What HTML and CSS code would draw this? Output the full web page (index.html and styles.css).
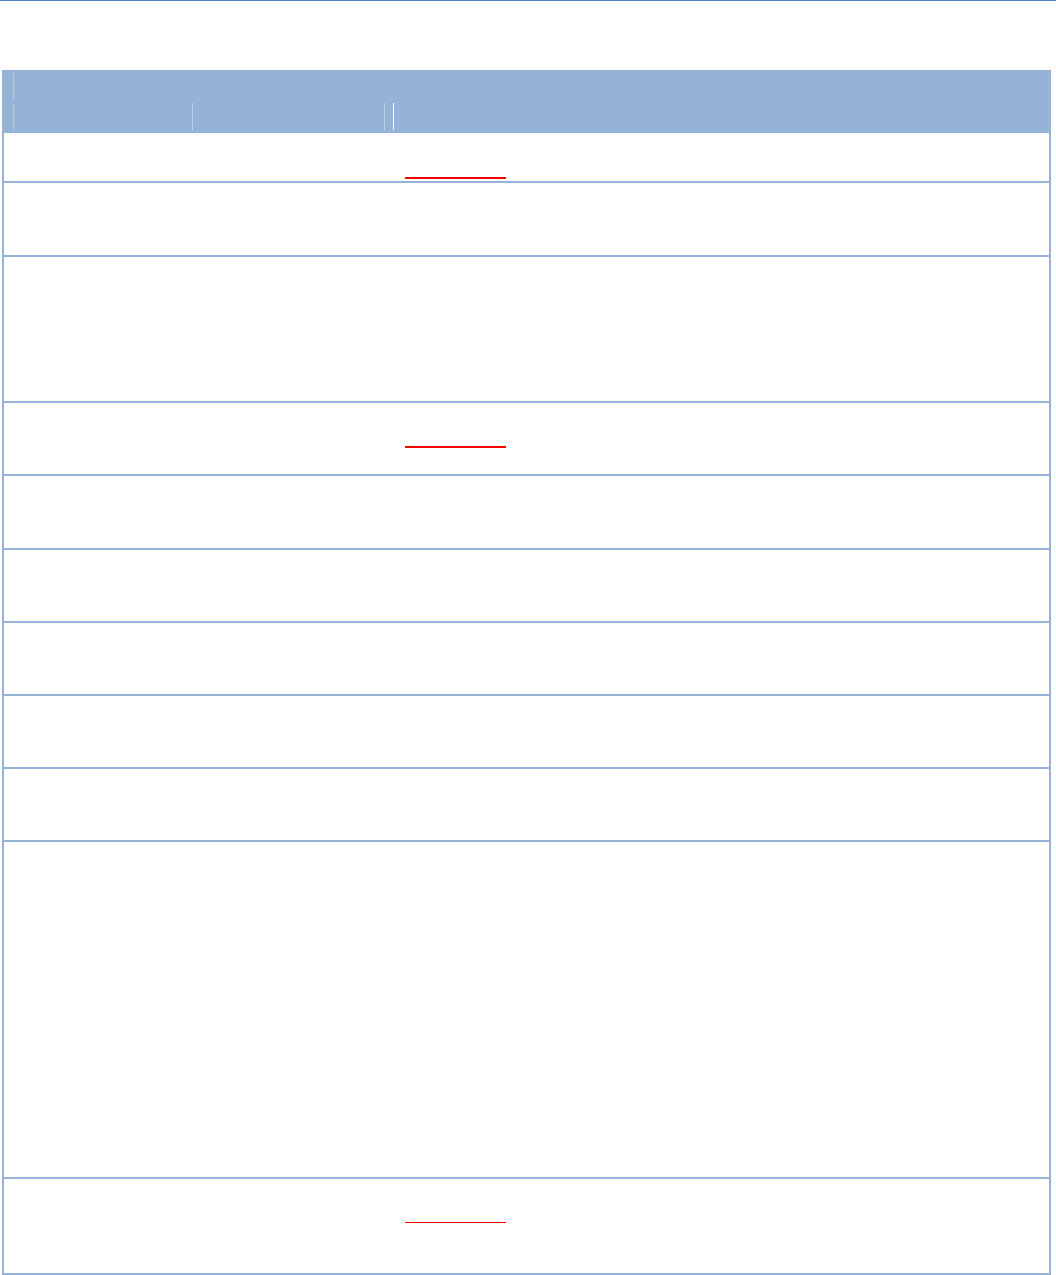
FILE: index.html
```html
<html>
    <head>
        <meta http-equiv="content-type" content="text/html; charset=utf-8" />
        <link rel="stylesheet" href="styles.css">
        <title>Table</title>
    </head>
    <body>
        <div class="top-rule"></div>

        <div class="sheet">
            <div class="head">
                <div class="head-row">
                    <div class="hc hc-wide"></div>
                </div>
                <div class="head-row">
                    <div class="hc hc-1"></div>
                    <div class="hc hc-2"></div>
                    <div class="hc hc-3"></div>
                    <div class="hc hc-4"></div>
                </div>
            </div>

            <div class="row r-1"><div class="mark mark-thick"></div></div>
            <div class="row r-2"></div>
            <div class="row r-3"></div>
            <div class="row r-4"><div class="mark mark-thick"></div></div>
            <div class="row r-5"></div>
            <div class="row r-6"></div>
            <div class="row r-7"></div>
            <div class="row r-8"></div>
            <div class="row r-9"></div>
            <div class="row r-10"></div>
            <div class="row r-11"><div class="mark mark-thin"></div></div>
        </div>
    </body>
</html>
```

FILE: styles.css
```css
@charset "UTF-8";
body {
    margin: 0;
    font-family: "Liberation Sans", Arial, sans-serif;
    background: #ffffff;
}
.top-rule {
    height: 1px;
    background: #4f81bd;
}
.sheet {
    width: 1045px;
    margin-top: 69px;
    margin-left: 2px;
    border-left: 2px solid #95b3d7;
    border-right: 2px solid #95b3d7;
}
/* header block, two bands with faint column lines */
.head {
    background: #95b3d7;
    height: 63px;
    margin-left: -2px;
    margin-right: -2px;
    padding-top: 3px;
    box-sizing: border-box;
    display: flex;
    flex-direction: column;
    gap: 3px;
}
.head-row {
    display: flex;
    height: 27px;
}
.hc {
    border-left: 1px solid #b9cce5;
    height: 100%;
}
.hc-wide {
    margin-left: 11px;
    flex: 1;
}
.hc-1 {
    margin-left: 11px;
    width: 178px;
}
.hc-2 {
    width: 191px;
}
.hc-3 {
    width: 8px;
}
.hc-4 {
    flex: 1;
    border-left-color: #ffffff;
}
/* body rows - flow-root so the mark margin stays inside */
.row {
    display: flow-root;
    border-bottom: 2px solid #95b3d7;
}
.r-1 { height: 48px; }
.r-2 { height: 72px; }
.r-3 { height: 144px; }
.r-4 { height: 71px; }
.r-5 { height: 72px; }
.r-6 { height: 71px; }
.r-7 { height: 71px; }
.r-8 { height: 71px; }
.r-9 { height: 71px; }
.r-10 { height: 335px; }
.r-11 { height: 94px; }
.mark {
    margin-left: 401px;
    width: 101px;
    background: #ff0000;
}
.mark-thick {
    height: 2px;
}
.r-1 .mark {
    margin-top: 44px;
}
.r-4 .mark {
    margin-top: 43px;
}
.mark-thin {
    height: 1px;
    margin-top: 43px;
}
```
